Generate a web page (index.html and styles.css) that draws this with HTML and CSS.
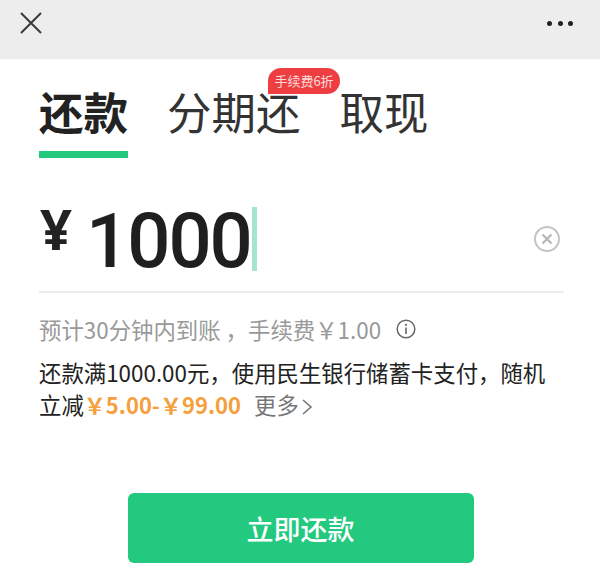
FILE: index.html
```html
<!DOCTYPE html>
<html lang="zh-CN">
<head>
    <meta charset="utf-8">
    <title>还款</title>
    <link rel="stylesheet" href="styles.css">
</head>
<body>
    <header class="topbar">
        <svg class="close" width="26" height="26" viewBox="0 0 26 26">
            <path d="M3 3L23 23M23 3L3 23" stroke="#3a3a3a" stroke-width="2" fill="none"/>
        </svg>
        <div class="dots"><i></i><i></i><i></i></div>
    </header>

    <section class="main">
        <nav class="tabs">
            <div class="tab active">还款</div>
            <div class="tab">分期还<span class="badge">手续费6折</span></div>
            <div class="tab">取现</div>
        </nav>

        <div class="amount">
            <span class="yen">¥</span>
            <span class="num">1000</span>
            <span class="caret"></span>
            <svg class="clear" width="28" height="28" viewBox="0 0 28 28">
                <circle cx="14" cy="14" r="12" stroke="#c4c4c4" stroke-width="2" fill="none"/>
                <path d="M9.5 9.5L18.5 18.5M18.5 9.5L9.5 18.5" stroke="#b8b8b8" stroke-width="2.4" fill="none"/>
            </svg>
        </div>

        <div class="fee">
            <span>预计30分钟内到账 ，手续费￥1.00</span>
            <svg class="info" width="20" height="20" viewBox="0 0 20 20">
                <circle cx="10" cy="10" r="8.8" stroke="#666" stroke-width="1.5" fill="none"/>
                <path d="M10 8.5V15" stroke="#666" stroke-width="1.6"/>
                <circle cx="10" cy="5.8" r="1.1" fill="#666"/>
            </svg>
        </div>

        <p class="promo">还款满1000.00元，使用民生银行储蓄卡支付，随机<br>立减<b>￥5.00-￥99.00</b><span class="more">更多<svg width="12" height="18" viewBox="0 0 12 18"><path d="M2 2L10 9L2 16" stroke="#777" stroke-width="1.6" fill="none"/></svg></span></p>

        <div class="btnrow">
            <button class="paybtn">立即还款</button>
        </div>
    </section>
</body>
</html>
```

FILE: styles.css
```css
* {
    box-sizing: border-box;
}
html, body {
    margin: 0;
    padding: 0;
}
body {
    width: 600px;
    height: 587px;
    overflow: hidden;
    background: #fff;
    font-family: "Noto Sans CJK SC", "Noto Sans", sans-serif;
    color: #222;
}
.topbar {
    height: 59px;
    background: #ededed;
    display: flex;
    align-items: center;
    justify-content: space-between;
    padding: 0 27px 13px 18px;
}
.dots {
    display: flex;
    gap: 5.5px;
}
.dots i {
    width: 5px;
    height: 5px;
    border-radius: 50%;
    background: #222;
}
.main {
    padding: 0 36px 0 39px;
}
.tabs {
    display: flex;
    gap: 39px;
    height: 99px;
    padding-top: 19px;
}
.tab {
    position: relative;
    font-size: 44.5px;
    line-height: 66px;
    height: 80px;
    color: #333;
}
.tab.active {
    font-weight: 700;
    color: #222;
    border-bottom: 7px solid #22c97f;
}
.badge {
    position: absolute;
    left: 101px;
    top: -10px;
    width: 72px;
    height: 26px;
    border-radius: 14px 14px 14px 0;
    background: #ef3e42;
    color: #fbdcdc;
    font-size: 13px;
    line-height: 26px;
    text-align: center;
}
.amount {
    display: flex;
    align-items: center;
    height: 135px;
    padding-top: 32px;
    border-bottom: 2px solid #ececec;
}
.yen {
    font-family: "Noto Sans", sans-serif;
    font-size: 56px;
    font-weight: 700;
    line-height: 64px;
    margin-left: 1px;
    margin-top: -25px;
    width: 28px;
}
.num {
    font-family: Roboto, sans-serif;
    font-size: 76px;
    font-weight: 500;
    line-height: 80px;
    margin-left: 18px;
    color: #1f1f1f;
    letter-spacing: -2px;
}
.caret {
    width: 5px;
    height: 64px;
    background: #a5e5cc;
    margin-left: 1px;
    margin-top: -4px;
}
.clear {
    margin-left: auto;
    margin-right: 3px;
    margin-top: -4px;
}
.fee {
    display: flex;
    align-items: center;
    gap: 15px;
    margin-top: 18px;
    font-size: 22.4px;
    line-height: 36px;
    color: #999;
}
.promo {
    margin: 9px 0 0;
    font-size: 22.4px;
    line-height: 32px;
    color: #222;
}
.promo b {
    color: #f5a03c;
    font-size: 22px;
    font-weight: 700;
}
.more {
    color: #777;
    margin-left: 13px;
}
.more svg {
    margin-left: 2px;
    vertical-align: -2px;
}
.btnrow {
    display: flex;
    justify-content: center;
    margin-top: 73px;
    padding-right: 2px;
}
.paybtn {
    width: 346px;
    height: 70px;
    border: none;
    border-radius: 6px;
    background: #22c97f;
    color: #fff;
    font-family: inherit;
    font-size: 27px;
    font-weight: 500;
}
```
